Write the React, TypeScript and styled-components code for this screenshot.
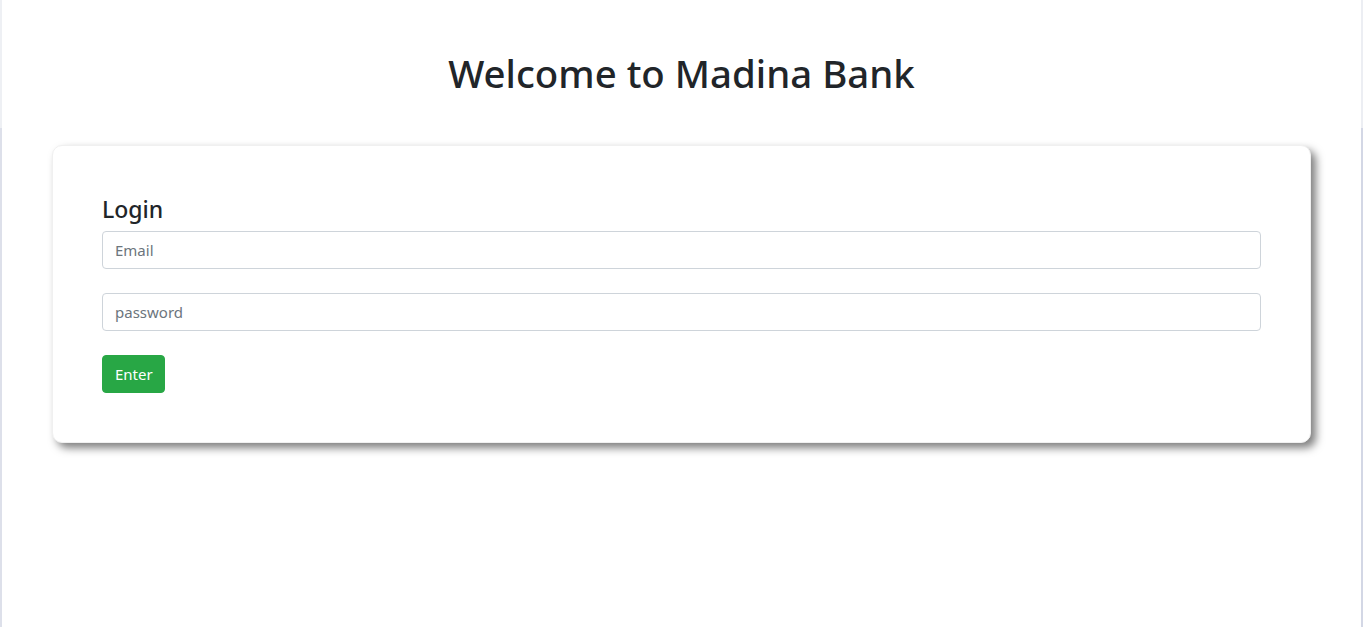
import React from "react";
import styled, { createGlobalStyle } from "styled-components";

const Global = createGlobalStyle`
  html, body { margin: 0; padding: 0; background: #fff; }
  body { font-family: "Noto Sans", "Open Sans", sans-serif; color: #212529; }
  * { box-sizing: border-box; }
`;

const Page = styled.div`
  display: flex;
  flex-direction: column;
  min-height: 627px;
`;

const Header = styled.header`
  height: 128px;
  padding-top: 18px;
  display: flex;
  align-items: center;
  justify-content: center;
  border-left: 2px solid #eef0f4;
  border-right: 2px solid #eceef3;
`;

const Title = styled.h1`
  margin: 0;
  font-size: 38.4px;
  font-weight: 500;
  line-height: 1.2;
  color: #212529;
`;

const Main = styled.main`
  flex: 1;
  border-left: 2px solid #dde0ea;
  border-right: 2px solid #d3d7e5;
  padding: 17px 50px 0 50px;
`;

const Card = styled.section`
  background: #fff;
  border-radius: 10px;
  border: 1px solid #f0f0f0;
  box-shadow: 5px 5px 9px rgba(0, 0, 0, 0.5);
  padding: 49px;
  display: flex;
  flex-direction: column;
`;

const Heading = styled.h4`
  margin: 0 0 7px;
  font-size: 23px;
  font-weight: 500;
  line-height: 29px;
  color: #212529;
`;

const Input = styled.input<{ $gap?: number }>`
  display: block;
  width: 100%;
  height: 38px;
  padding: 6px 12px;
  font-family: inherit;
  font-size: 15px;
  color: #495057;
  background: #fff;
  border: 1px solid #ced4da;
  border-radius: 4px;
  margin-bottom: ${(p) => p.$gap ?? 24}px;
  outline: none;
  &::placeholder { color: #6c757d; opacity: 1; }
`;

const Button = styled.button`
  align-self: flex-start;
  height: 38px;
  padding: 0 11px 0 12px;
  font-family: inherit;
  font-size: 15px;
  color: #fff;
  background: #28a745;
  border: 1px solid #28a745;
  border-radius: 4px;
  cursor: pointer;
`;

export default function App() {
  return (
    <>
      <Global />
      <Page>
        <Header>
          <Title>Welcome to Madina Bank</Title>
        </Header>
        <Main>
          <Card>
            <Heading>Login</Heading>
            <Input type="email" placeholder="Email" />
            <Input type="password" placeholder="password" />
            <Button>Enter</Button>
          </Card>
        </Main>
      </Page>
    </>
  );
}
